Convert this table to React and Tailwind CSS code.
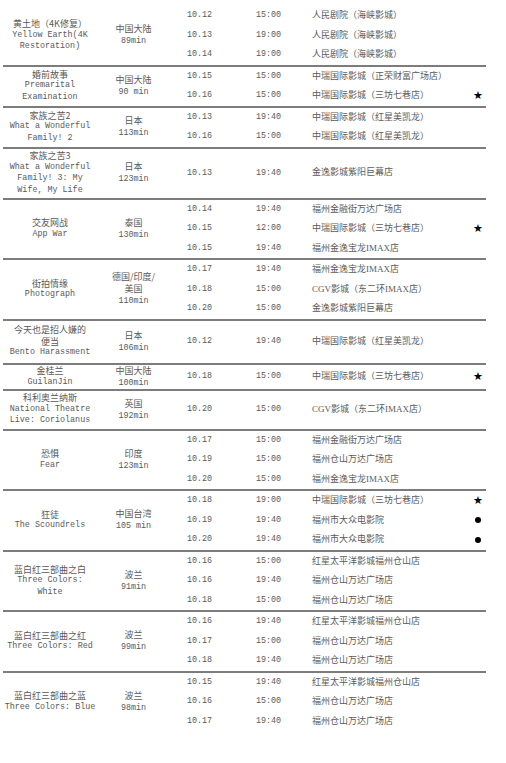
import React from 'react';

const films = [
    {
        title: ['黄土地（4K修复）'], en: ['Yellow Earth(4K', 'Restoration)'], country: ['中国大陆'], len: '89min',
        rows: [
            ['10.12', '15:00', '人民剧院（海峡影城）'],
            ['10.13', '19:00', '人民剧院（海峡影城）'],
            ['10.14', '19:00', '人民剧院（海峡影城）'],
        ],
    },
    {
        title: ['婚前故事'], en: ['Premarital', 'Examination'], country: ['中国大陆'], len: '90 min',
        rows: [
            ['10.15', '15:00', '中瑞国际影城（正荣财富广场店）'],
            ['10.16', '15:00', '中瑞国际影城（三坊七巷店）', 'star'],
        ],
    },
    {
        title: ['家族之苦2'], en: ['What a Wonderful', 'Family! 2'], country: ['日本'], len: '113min',
        rows: [
            ['10.13', '19:40', '中瑞国际影城（红星美凯龙）'],
            ['10.16', '15:00', '中瑞国际影城（红星美凯龙）'],
        ],
    },
    {
        title: ['家族之苦3'], en: ['What a Wonderful', 'Family! 3: My', 'Wife, My Life'], country: ['日本'], len: '123min',
        h: 'h-[51px]',
        rows: [['10.13', '19:40', '金逸影城紫阳巨幕店']],
    },
    {
        title: ['交友网战'], en: ['App War'], country: ['泰国'], len: '130min',
        rows: [
            ['10.14', '19:40', '福州金融街万达广场店'],
            ['10.15', '12:00', '中瑞国际影城（三坊七巷店）', 'star'],
            ['10.15', '19:40', '福州金逸宝龙IMAX店'],
        ],
    },
    {
        title: ['街拍情缘'], en: ['Photograph'], country: ['德国/印度/', '美国'], len: '110min',
        rows: [
            ['10.17', '19:40', '福州金逸宝龙IMAX店'],
            ['10.18', '15:00', 'CGV影城（东二环IMAX店）'],
            ['10.20', '15:00', '金逸影城紫阳巨幕店'],
        ],
    },
    {
        title: ['今天也是招人嫌的', '便当'], en: ['Bento Harassment'], country: ['日本'], len: '106min',
        h: 'h-[44px]',
        rows: [['10.12', '19:40', '中瑞国际影城（红星美凯龙）']],
    },
    {
        title: ['金桂兰'], en: ['GuilanJin'], country: ['中国大陆'], len: '100min',
        h: 'h-[26px]',
        rows: [['10.18', '15:00', '中瑞国际影城（三坊七巷店）', 'star']],
    },
    {
        title: ['科利奥兰纳斯'], en: ['National Theatre', 'Live: Coriolanus'], country: ['英国'], len: '192min',
        h: 'h-[40px]',
        rows: [['10.20', '15:00', 'CGV影城（东二环IMAX店）']],
    },
    {
        title: ['恐惧'], en: ['Fear'], country: ['印度'], len: '123min',
        rows: [
            ['10.17', '15:00', '福州金融街万达广场店'],
            ['10.19', '15:00', '福州仓山万达广场店'],
            ['10.20', '15:00', '福州金逸宝龙IMAX店'],
        ],
    },
    {
        title: ['狂徒'], en: ['The Scoundrels'], country: ['中国台湾'], len: '105 min',
        rows: [
            ['10.18', '19:00', '中瑞国际影城（三坊七巷店）', 'star'],
            ['10.19', '19:40', '福州市大众电影院', 'dot'],
            ['10.20', '19:40', '福州市大众电影院', 'dot'],
        ],
    },
    {
        title: ['蓝白红三部曲之白'], en: ['Three Colors:', 'White'], country: ['波兰'], len: '91min',
        rows: [
            ['10.16', '15:00', '红星太平洋影城福州仓山店'],
            ['10.16', '19:40', '福州仓山万达广场店'],
            ['10.18', '15:00', '福州仓山万达广场店'],
        ],
    },
    {
        title: ['蓝白红三部曲之红'], en: ['Three Colors: Red'], country: ['波兰'], len: '99min',
        rows: [
            ['10.16', '19:40', '红星太平洋影城福州仓山店'],
            ['10.17', '15:00', '福州仓山万达广场店'],
            ['10.18', '19:40', '福州仓山万达广场店'],
        ],
    },
    {
        title: ['蓝白红三部曲之蓝'], en: ['Three Colors: Blue'], country: ['波兰'], len: '98min',
        rows: [
            ['10.15', '19:40', '红星太平洋影城福州仓山店'],
            ['10.16', '15:00', '福州仓山万达广场店'],
            ['10.17', '19:40', '福州仓山万达广场店'],
        ],
    },
];

const cjk = "font-['Noto_Sans_CJK_SC',sans-serif] text-[9px]";
const mono = "font-['Liberation_Mono',monospace] text-[8.4px]";

// ★ 和 ● 标记
const Mark = ({ type }) => {
    if (type === 'star') return <span className="text-[11px] leading-none text-black font-['DejaVu_Sans',sans-serif]">★</span>;
    if (type === 'dot') return <span className="block w-[6px] h-[6px] rounded-full bg-black" />;
    return null;
};

const FilmBlock = ({ film, last }) => (
    <div className={`flex ${film.h || ''} ${last ? '' : 'border-b-2 border-[#7c7c7c]'}`}>
        <div className="w-[94px] flex flex-col items-center justify-center text-center leading-[11.5px]">
            {film.title.map((t, i) => <div key={i} className={cjk}>{t}</div>)}
            {film.en.map((t, i) => <div key={i} className={`${mono} whitespace-pre`}>{t}</div>)}
        </div>
        <div className="w-[73px] flex flex-col items-center justify-center text-center leading-[12px]">
            {film.country.map((t, i) => <div key={i} className={cjk}>{t}</div>)}
            <div className={mono}>{film.len}</div>
        </div>
        <div className="flex-1 flex flex-col justify-center">
            {film.rows.map((r, i) => (
                <div key={i} className="h-[19.5px] flex items-center">
                    <div className={`w-[59px] text-center ${mono}`}>{r[0]}</div>
                    <div className={`w-[83px] pl-[27px] ${mono}`}>{r[1]}</div>
                    <div className="w-[158px] text-[9px] font-['Liberation_Serif','Noto_Sans_CJK_SC',serif] whitespace-nowrap">{r[2]}</div>
                    <div className="w-[16px] flex items-center justify-center">
                        <Mark type={r[3]} />
                    </div>
                </div>
            ))}
        </div>
    </div>
);

export default function App() {
    return (
        <div className="w-[506px] min-h-[763px] bg-white text-[#5a5a5a] pl-[3px] pt-[6px]">
            <div className="w-[483px]">
                {films.map((f, i) => (
                    <FilmBlock key={i} film={f} last={i === films.length - 1} />
                ))}
            </div>
        </div>
    );
}
